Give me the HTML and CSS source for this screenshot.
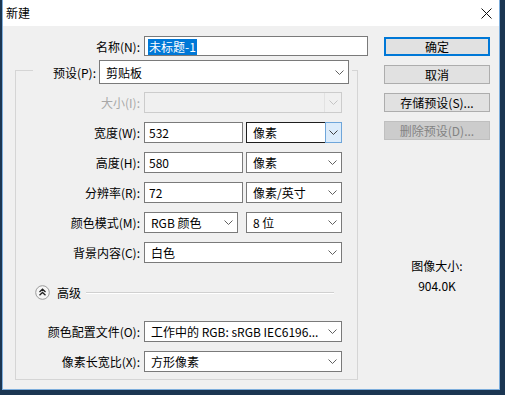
FILE: index.html
```html
<!DOCTYPE html>
<html lang="zh-CN">
<head>
    <meta charset="UTF-8">
    <title>新建</title>
    <link rel="stylesheet" href="styles.css">
</head>
<body>
    <div class="window">
        <!-- 标题栏 -->
        <div class="titlebar">
            <span class="title">新建</span>
            <svg class="close" width="11" height="11" viewBox="0 0 11 11">
                <path d="M0.5 0.5 L10.5 10.5 M10.5 0.5 L0.5 10.5" stroke="#111" stroke-width="1" fill="none"/>
            </svg>
        </div>

        <div class="dialog">
            <div class="form">
                <div class="name-row">
                    <label class="name-label">名称(N):</label>
                    <div class="textbox name-box"><span class="selected">未标题-1</span></div>
                </div>

                <fieldset class="group">
                    <legend class="preset">
                        <label class="preset-label">预设(P):</label>
                        <div class="combo preset-combo">
                            <span class="combo-text">剪贴板</span>
                            <span class="combo-arrow"><svg width="9" height="5" viewBox="0 0 9 5"><path d="M0.5 0.5 L4.5 4.5 L8.5 0.5" fill="none" stroke="#606060"/></svg></span>
                        </div>
                    </legend>

                    <div class="group-body">
                        <div class="row">
                            <label class="row-label disabled">大小(I):</label>
                            <div class="combo wide disabled">
                                <span class="combo-text"></span>
                                <span class="combo-arrow"><svg width="9" height="5" viewBox="0 0 9 5"><path d="M0.5 0.5 L4.5 4.5 L8.5 0.5" fill="none" stroke="#c4c4c4"/></svg></span>
                            </div>
                        </div>
                        <div class="row">
                            <label class="row-label">宽度(W):</label>
                            <input class="textbox num" type="text" value="532">
                            <div class="combo unit focused">
                                <span class="combo-text">像素</span>
                                <span class="combo-arrow"><svg width="9" height="5" viewBox="0 0 9 5"><path d="M0.5 0.5 L4.5 4.5 L8.5 0.5" fill="none" stroke="#404040"/></svg></span>
                            </div>
                        </div>
                        <div class="row">
                            <label class="row-label">高度(H):</label>
                            <input class="textbox num" type="text" value="580">
                            <div class="combo unit">
                                <span class="combo-text">像素</span>
                                <span class="combo-arrow"><svg width="9" height="5" viewBox="0 0 9 5"><path d="M0.5 0.5 L4.5 4.5 L8.5 0.5" fill="none" stroke="#606060"/></svg></span>
                            </div>
                        </div>
                        <div class="row">
                            <label class="row-label">分辨率(R):</label>
                            <input class="textbox num" type="text" value="72">
                            <div class="combo unit">
                                <span class="combo-text">像素/英寸</span>
                                <span class="combo-arrow"><svg width="9" height="5" viewBox="0 0 9 5"><path d="M0.5 0.5 L4.5 4.5 L8.5 0.5" fill="none" stroke="#606060"/></svg></span>
                            </div>
                        </div>
                        <div class="row">
                            <label class="row-label">颜色模式(M):</label>
                            <div class="combo mode">
                                <span class="combo-text">RGB 颜色</span>
                                <span class="combo-arrow"><svg width="9" height="5" viewBox="0 0 9 5"><path d="M0.5 0.5 L4.5 4.5 L8.5 0.5" fill="none" stroke="#606060"/></svg></span>
                            </div>
                            <div class="combo unit bits">
                                <span class="combo-text">8 位</span>
                                <span class="combo-arrow"><svg width="9" height="5" viewBox="0 0 9 5"><path d="M0.5 0.5 L4.5 4.5 L8.5 0.5" fill="none" stroke="#606060"/></svg></span>
                            </div>
                        </div>
                        <div class="row">
                            <label class="row-label">背景内容(C):</label>
                            <div class="combo wide">
                                <span class="combo-text">白色</span>
                                <span class="combo-arrow"><svg width="9" height="5" viewBox="0 0 9 5"><path d="M0.5 0.5 L4.5 4.5 L8.5 0.5" fill="none" stroke="#606060"/></svg></span>
                            </div>
                        </div>

                        <!-- 高级 -->
                        <div class="advanced">
                            <svg class="toggle" width="15" height="15" viewBox="0 0 15 15">
                                <circle cx="7.5" cy="7.5" r="6.8" fill="#f6f6f6" stroke="#9a9a9a"/>
                                <path d="M4.5 7 L7.5 4.2 L10.5 7 M4.5 10.3 L7.5 7.5 L10.5 10.3" fill="none" stroke="#222" stroke-width="1.3"/>
                            </svg>
                            <span class="advanced-text">高级</span>
                            <span class="separator"></span>
                        </div>

                        <div class="row">
                            <label class="row-label">颜色配置文件(O):</label>
                            <div class="combo wide">
                                <span class="combo-text">工作中的 RGB: sRGB IEC6196...</span>
                                <span class="combo-arrow"><svg width="9" height="5" viewBox="0 0 9 5"><path d="M0.5 0.5 L4.5 4.5 L8.5 0.5" fill="none" stroke="#606060"/></svg></span>
                            </div>
                        </div>
                        <div class="row">
                            <label class="row-label">像素长宽比(X):</label>
                            <div class="combo wide">
                                <span class="combo-text">方形像素</span>
                                <span class="combo-arrow"><svg width="9" height="5" viewBox="0 0 9 5"><path d="M0.5 0.5 L4.5 4.5 L8.5 0.5" fill="none" stroke="#606060"/></svg></span>
                            </div>
                        </div>
                    </div>
                </fieldset>
            </div>

            <!-- 按钮 -->
            <div class="side">
                <button class="btn default">确定</button>
                <button class="btn">取消</button>
                <button class="btn">存储预设(S)...</button>
                <button class="btn" disabled>删除预设(D)...</button>

                <div class="info">
                    <div>图像大小:</div>
                    <div>904.0K</div>
                </div>
            </div>
        </div>
    </div>
</body>
</html>
```

FILE: styles.css
```css
* {
    box-sizing: border-box;
}

body {
    margin: 0;
    width: 505px;
    height: 395px;
    overflow: hidden;
    background-color: #1b3652;
    font-family: "Noto Sans CJK SC", "Microsoft YaHei", sans-serif;
    font-size: 12px;
    color: #000;
}

.window {
    margin-left: 2px;
    width: 498px;
    height: 390px;
    border: 1px solid #7eaedc;
    border-top: none;
    background-color: #f0f0f0;
    display: flex;
    flex-direction: column;
}

.titlebar {
    height: 26px;
    background-color: #fff;
    display: flex;
    align-items: center;
    justify-content: space-between;
    padding: 0 7px 0 3px;
}

.title {
    line-height: 16px;
}

.dialog {
    flex: 1;
    display: flex;
}

/* 左侧表单 */
.form {
    width: 381px;
    padding-top: 10px;
}

.name-row {
    display: flex;
    align-items: center;
    height: 20px;
}

.name-label {
    width: 137px;
    margin-right: 4px;
    text-align: right;
}

.textbox {
    height: 21px;
    border: 1px solid #7a7a7a;
    background-color: #fff;
    font: inherit;
    color: #000;
    padding: 0 4px;
    outline: none;
}

.name-box {
    width: 224px;
    height: 20px;
    padding: 1px 3px;
}

.selected {
    display: inline-block;
    height: 16px;
    line-height: 16px;
    padding: 0 1px;
    background-color: #0078d7;
    color: #fff;
}

.group {
    margin: 0 0 0 12px;
    padding: 0 0 7px 0;
    width: 343px;
    border: 1px solid #d5d5d5;
    min-width: 0;
}

.preset {
    display: flex;
    align-items: center;
    margin-left: 17px;
    padding: 4px 3px 0 3px;
}

.preset-label {
    width: 60px;
    margin-right: 3px;
    text-align: right;
}

.group-body {
    display: flex;
    flex-direction: column;
    gap: 9px;
    padding-top: 8px;
}

.row {
    display: flex;
    align-items: center;
    height: 21px;
}

.row-label {
    width: 124px;
    margin-right: 4px;
    text-align: right;
    white-space: nowrap;
}

.row-label.disabled {
    color: #a8a8a8;
}

.num {
    width: 99px;
    margin-right: 3px;
}

/* 下拉框 */
.combo {
    display: flex;
    align-items: center;
    height: 21px;
    border: 1px solid #7a7a7a;
    background-color: #fff;
}

.combo-text {
    flex: 1;
    padding-left: 6px;
    white-space: nowrap;
    overflow: hidden;
}

.combo-arrow {
    width: 17px;
    align-self: stretch;
    display: flex;
    align-items: center;
    justify-content: center;
}

.preset-combo {
    width: 250px;
    height: 24px;
}

.wide {
    width: 198px;
}

.unit {
    width: 96px;
}

.mode {
    width: 94px;
    margin-right: 8px;
}

.combo.disabled {
    background-color: #f0f0f0;
    border-color: #cccccc;
}

.combo.disabled .combo-arrow {
    border-left: 1px solid #e2e2e2;
}

.combo.focused {
    border-color: #1e1e1e;
}

.combo.focused .combo-arrow {
    background-color: #dcecfb;
    border: 1px solid #6fa6da;
    margin: -1px -1px -1px 0;
}

.advanced {
    display: flex;
    align-items: center;
    height: 21px;
    margin: 10px 0 9px 0;
    padding-left: 19px;
}

.advanced-text {
    margin-left: 7px;
}

.separator {
    flex: 1;
    margin: 0 23px 0 5px;
    border-top: 1px solid #d0d0d0;
    border-bottom: 1px solid #fff;
}

/* 右侧按钮 */
.side {
    width: 106px;
    padding-top: 11px;
    display: flex;
    flex-direction: column;
    gap: 9px;
}

.btn {
    height: 19px;
    padding: 0;
    font: inherit;
    color: #000;
    background-color: #e1e1e1;
    border: 1px solid #adadad;
}

.btn.default {
    border-color: #0078d7;
    box-shadow: inset 0 0 0 1px #0078d7;
}

.btn:disabled {
    background-color: #cccccc;
    border-color: #bfbfbf;
    color: #838383;
}

.info {
    margin-top: 107px;
    text-align: center;
    line-height: 20px;
}
```
